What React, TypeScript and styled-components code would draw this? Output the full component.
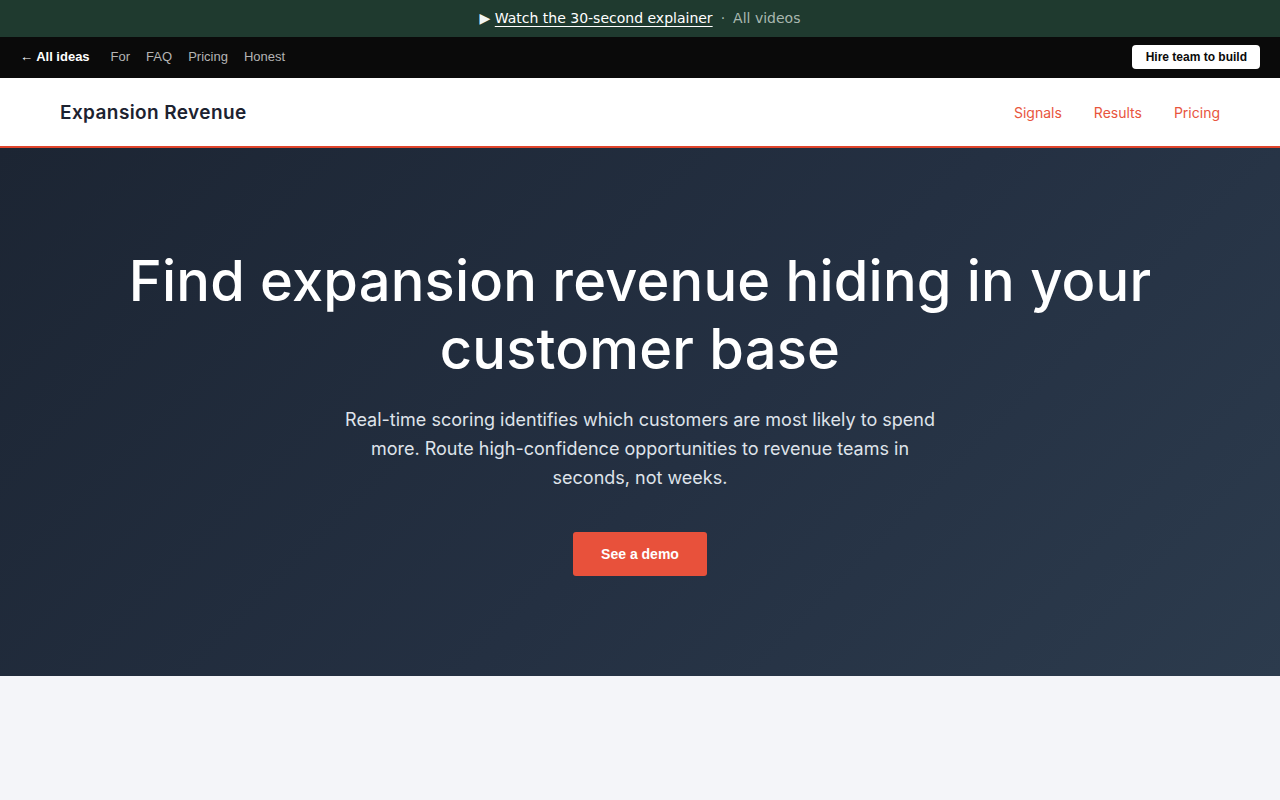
import styled, { createGlobalStyle } from "styled-components";

const GlobalStyle = createGlobalStyle`
    body {
        margin: 0;
        background: #f4f5f9;
        font-family: "DejaVu Sans", sans-serif;
    }
    * { box-sizing: border-box; }
`

const Banner = styled.div`
    height: 37px;
    background: #1f3a2f;
    color: #f1f5f3;
    font-family: "DejaVu Sans", sans-serif;
    font-size: 14px;
    display: flex;
    align-items: center;
    justify-content: center;
    gap: 8px;
    padding-bottom: 1px;
`

const BannerLink = styled.a`
    color: #ffffff;
    text-decoration: underline;
    text-underline-offset: 3px;
`

const BannerMuted = styled.span`
    color: #a9b8b0;
`

const TopNav = styled.nav`
    height: 41px;
    background: #0a0a0a;
    display: flex;
    align-items: center;
    justify-content: space-between;
    padding: 0 20px 2px;
    font-family: "Liberation Sans", Arial, sans-serif;
    font-size: 13px;
`

const TopLinks = styled.div`
    display: flex;
    align-items: center;
    gap: 16px;
`

const TopLink = styled.a<{ $strong?: boolean }>`
    color: ${p => (p.$strong ? "#ffffff" : "#b4b4b4")};
    font-weight: ${p => (p.$strong ? 700 : 400)};
    text-decoration: none;
    margin-right: ${p => (p.$strong ? "5px" : "0")};
`

const HireButton = styled.button`
    background: #ffffff;
    color: #0a0a0a;
    border: none;
    border-radius: 4px;
    font-family: "Liberation Sans", Arial, sans-serif;
    font-weight: 700;
    font-size: 12px;
    padding: 0 13px 0 14px;
    height: 24px;
`

const Header = styled.header`
    height: 70px;
    background: #ffffff;
    border-bottom: 2px solid #e0442b;
    display: flex;
    align-items: center;
    justify-content: space-between;
    padding: 0 60px;
    font-family: Inter, "DejaVu Sans", sans-serif;
`

const Brand = styled.div`
    font-size: 19px;
    font-weight: 600;
    letter-spacing: 0.4px;
    color: #1c2230;
`

const HeaderLinks = styled.div`
    display: flex;
    gap: 32px;
`

const HeaderLink = styled.a`
    color: #e8553d;
    font-size: 14px;
    text-decoration: none;
`

const Hero = styled.section`
    background: linear-gradient(135deg, #1c2533 0%, #243042 55%, #2c3b4d 100%);
    padding: 99px 40px 100px;
    display: flex;
    flex-direction: column;
    align-items: center;
    text-align: center;
    font-family: Inter, "DejaVu Sans", sans-serif;
`

const Title = styled.h1`
    margin: 0;
    color: #ffffff;
    font-size: 56px;
    font-weight: 500;
    line-height: 68px;
    letter-spacing: 0.2px;
    max-width: 1060px;
`

const Lead = styled.p`
    margin: 22px 0 0;
    color: #dfe3ea;
    font-size: 18px;
    line-height: 29px;
    max-width: 600px;
`

const DemoButton = styled.button`
    margin-top: 40px;
    width: 134px;
    height: 44px;
    background: #e8513b;
    color: #ffffff;
    border: none;
    border-radius: 3px;
    font-family: "Liberation Sans", Arial, sans-serif;
    font-weight: 700;
    font-size: 14px;
`

const Rest = styled.div`
    height: 124px;
    background: #f4f5f9;
`

export default function App() {
    return (
        <>
            <GlobalStyle />
            <Banner>
                <span>▶ <BannerLink href="#">Watch the 30-second explainer</BannerLink></span>
                <BannerMuted>·</BannerMuted>
                <BannerMuted>All videos</BannerMuted>
            </Banner>
            <TopNav>
                <TopLinks>
                    <TopLink $strong href="#">← All ideas</TopLink>
                    <TopLink href="#">For</TopLink>
                    <TopLink href="#">FAQ</TopLink>
                    <TopLink href="#">Pricing</TopLink>
                    <TopLink href="#">Honest</TopLink>
                </TopLinks>
                <HireButton>Hire team to build</HireButton>
            </TopNav>
            <Header>
                <Brand>Expansion Revenue</Brand>
                <HeaderLinks>
                    <HeaderLink href="#">Signals</HeaderLink>
                    <HeaderLink href="#">Results</HeaderLink>
                    <HeaderLink href="#">Pricing</HeaderLink>
                </HeaderLinks>
            </Header>
            <Hero>
                <Title>Find expansion revenue hiding in your customer base</Title>
                <Lead>
                    Real-time scoring identifies which customers are most likely to spend more. Route
                    high-confidence opportunities to revenue teams in seconds, not weeks.
                </Lead>
                <DemoButton>See a demo</DemoButton>
            </Hero>
            <Rest />
        </>
    )
}
